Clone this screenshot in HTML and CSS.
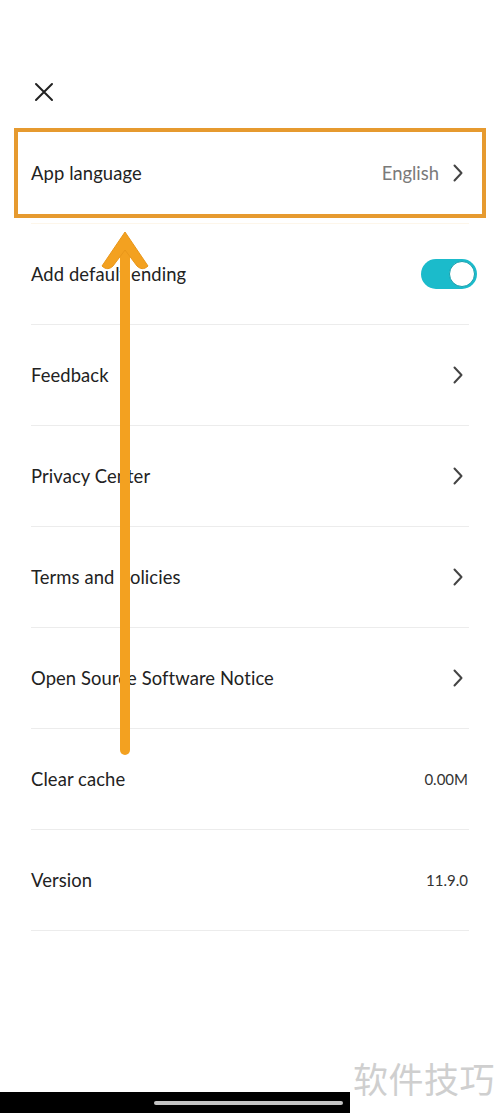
FILE: index.html
```html
<!DOCTYPE html>
<html>
<head>
<meta charset="utf-8">
<link rel="stylesheet" href="styles.css">
</head>
<body>
<div class="screen">
  <header class="top">
    <svg class="close" width="20" height="20" viewBox="0 0 20 20"><path d="M2 2 L18 18 M18 2 L2 18" stroke="#222" stroke-width="2" fill="none" stroke-linecap="round"/></svg>
  </header>
  <ul class="list">
    <li class="row first"><span class="label">App language</span><span class="right"><span class="value grey">English</span><svg class="chev" width="10" height="18" viewBox="0 0 10 18"><path d="M1.5 1.5 L8.5 9 L1.5 16.5" stroke="#444" stroke-width="2" fill="none" stroke-linecap="round" stroke-linejoin="round"/></svg></span></li>
    <li class="row"><span class="label">Add default ending</span><span class="toggle"><span class="knob"></span></span></li>
    <li class="row"><span class="label">Feedback</span><svg class="chev" width="10" height="18" viewBox="0 0 10 18"><path d="M1.5 1.5 L8.5 9 L1.5 16.5" stroke="#444" stroke-width="2" fill="none" stroke-linecap="round" stroke-linejoin="round"/></svg></li>
    <li class="row"><span class="label">Privacy Center</span><svg class="chev" width="10" height="18" viewBox="0 0 10 18"><path d="M1.5 1.5 L8.5 9 L1.5 16.5" stroke="#444" stroke-width="2" fill="none" stroke-linecap="round" stroke-linejoin="round"/></svg></li>
    <li class="row"><span class="label">Terms and Policies</span><svg class="chev" width="10" height="18" viewBox="0 0 10 18"><path d="M1.5 1.5 L8.5 9 L1.5 16.5" stroke="#444" stroke-width="2" fill="none" stroke-linecap="round" stroke-linejoin="round"/></svg></li>
    <li class="row"><span class="label">Open Source Software Notice</span><svg class="chev" width="10" height="18" viewBox="0 0 10 18"><path d="M1.5 1.5 L8.5 9 L1.5 16.5" stroke="#444" stroke-width="2" fill="none" stroke-linecap="round" stroke-linejoin="round"/></svg></li>
    <li class="row"><span class="label">Clear cache</span><span class="value small">0.00M</span></li>
    <li class="row"><span class="label">Version</span><span class="value small">11.9.0</span></li>
  </ul>
  <div class="spacer"></div>
  <footer class="bottom">
    <div class="navbar"><span class="home"></span></div>
    <div class="watermark">软件技巧</div>
  </footer>

  <div class="highlight"></div>
  <svg class="arrow" width="60" height="540" viewBox="0 0 60 540">
    <path d="M30 20 L30 522" stroke="#F3A120" stroke-width="10" stroke-linecap="round" fill="none"/>
    <path d="M30 4 L53 38 C49 42 45 41 42 38 L30 22 L18 38 C15 41 11 42 7 38 Z" fill="#F3A120" stroke="#E8961A" stroke-width="1" stroke-linejoin="round"/>
  </svg>
</div>
</body>
</html>
```

FILE: styles.css
```css
* { box-sizing: border-box; }
html, body { margin: 0; padding: 0; background: #fff; }
body { font-family: Lato, "Noto Sans", "Noto Sans CJK SC", sans-serif; color: #222; }
.screen { position: relative; width: 500px; height: 1113px; display: flex; flex-direction: column; overflow: hidden; }
.top { height: 123px; padding: 82px 0 0 34px; flex: none; }
.close { display: block; }
.list { list-style: none; margin: 0; padding: 0 31px; flex: none; }
.row { height: 101px; display: flex; align-items: center; justify-content: space-between; border-bottom: 1px solid #ececec; font-size: 18.4px; }
.row.first { border-bottom-color: #fdf6ea; }
.label { color: #222; letter-spacing: 0.1px; }
.right { display: flex; align-items: center; gap: 14px; }
.grey { color: #7a7a7a; }
.chev { display: block; margin-right: 6px; }
.value.small { font-size: 15px; color: #333; margin-right: 1px; }
.toggle { width: 56px; height: 30px; border-radius: 15px; background: #1BBBCB; display: flex; align-items: center; justify-content: flex-end; padding-right: 2px; margin-right: -8px; }
.knob { width: 26px; height: 26px; border-radius: 50%; background: #fff; border: 1.5px solid #169fad; }
.spacer { flex: 1; }
.bottom { height: 56px; flex: none; position: relative; display: flex; align-items: flex-end; }
.navbar { width: 350px; height: 21px; background: #000; display: flex; align-items: center; padding-left: 154px; }
.home { width: 189px; height: 4px; border-radius: 2px; background: #c4c4c4; }
.watermark { position: absolute; right: 5px; top: 1px; font-family: "Noto Sans CJK SC", sans-serif; font-size: 35px; color: #cfcfcf; letter-spacing: 0.5px; line-height: 40px; }
.highlight { position: absolute; left: 14px; top: 128px; width: 472px; height: 90px; border: 4px solid #E69A2F; }
.arrow { position: absolute; left: 95px; top: 228px; }
```
